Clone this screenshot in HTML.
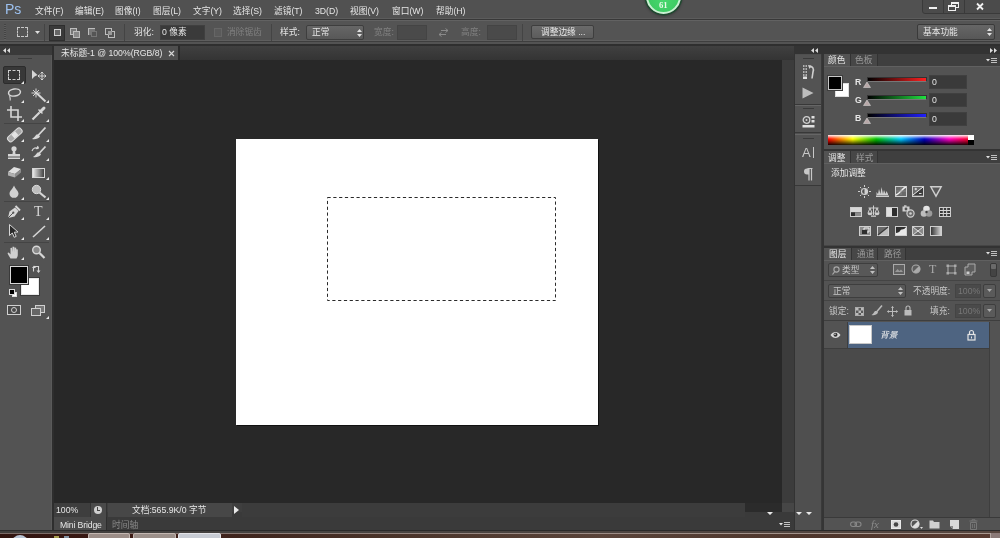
<!DOCTYPE html>
<html lang="zh-CN">
<head>
<meta charset="utf-8">
<title>Photoshop</title>
<style>
*{box-sizing:border-box;margin:0;padding:0}
html,body{width:1000px;height:538px;overflow:hidden;background:#535353}
body{position:relative;font-family:"Liberation Sans","Noto Sans CJK SC",sans-serif;font-size:8.7px;color:#e6e6e6;line-height:1}
.a{position:absolute}
.t{position:absolute;white-space:nowrap;line-height:12px;height:12px;will-change:transform}
svg{position:absolute;overflow:visible}
/* bars */
#menubar{left:0;top:0;width:1000px;height:19px;background:#515151;border-bottom:1px solid #5c5c5c}
#optbar{left:0;top:20px;width:1000px;height:24px;background:#545454;border-top:1px solid #626262;box-shadow:inset 0 -2px 0 #535353,inset 0 -3px 0 #3e3e3e,inset 0 -4px 0 #5e5e5e}
#sep1{left:0;top:19px;width:1000px;height:1px;background:#383838}
#sep2{left:0;top:44px;width:1000px;height:2px;background:#2f2f2f}
#tabbar{left:54px;top:46px;width:740px;height:14px;background:linear-gradient(180deg,#404040,#343434)}
#doctab{left:54px;top:46px;width:126px;height:14px;background:#4f4f4f;border-right:2px solid #2c2c2c}
#canvasbg{left:54px;top:60px;width:740px;height:443px;background:#282828}
#doc{left:236px;top:139px;width:362px;height:286px;background:#fff;box-shadow:1px 1px 0 #111}
#statusbar{left:54px;top:503px;width:740px;height:14px;background:#464646}
#bridgebar{left:54px;top:517px;width:740px;height:14px;background:#3a3a3a}
#taskbar{left:0;top:533px;width:1000px;height:5px;background:linear-gradient(90deg,#30140f 0%,#3c1a14 12%,#40261e 25%,#4a342a 40%,#5a443a 60%,#4e362c 80%,#573a30 100%)}
#tbband{left:0;top:530px;width:1000px;height:3px;background:linear-gradient(90deg,#403e3c 0%,#454341 30%,#4c4440 60%,#56463f 100%);border-top:1px solid #2a2a2a}
/* tools */
#toolhead{left:0;top:46px;width:52px;height:9px;background:#3a3a3a}
#toolgap{left:52px;top:46px;width:2px;height:484px;background:#2e2e2e}
#tools{left:0;top:55px;width:52px;height:475px;background:#535353;border-right:1px solid #5a5a5a}
/* right dock */
#dockgap{left:794px;top:46px;width:206px;height:484px;background:#353535}
#iconcol{left:796px;top:54px;width:26px;height:477px;background:#535353}
.panel{background:#535353}
.tabrow{background:#3f3f3f}
.tab{background:#535353}
.m{top:5px}
.fld{background:#3a3a3a;border:1px solid #404040}
</style>
</head>
<body>
<!-- menu bar -->
<div class="a" id="menubar"></div>
<div class="a" id="sep1"></div>
<div class="a" id="optbar"></div>
<div class="a" id="sep2"></div>
<div class="a" id="tabbar"></div>
<div class="a" id="doctab"></div>
<div class="a" id="canvasbg"></div>
<div class="a" id="doc"></div>
<div class="a" id="statusbar"></div>
<div class="a" id="bridgebar"></div>
<div class="a" id="toolhead"></div>
<div class="a" id="tools"></div>
<div class="a" id="toolgap"></div>
<div class="a" id="dockgap"></div>
<div class="a" id="iconcol"></div>

<!-- dock header -->
<div class="a" style="left:794px;top:46px;width:206px;height:8px;background:#333"></div>
<!-- icon column groups -->
<div class="a" style="left:794px;top:54px;width:28px;height:477px;background:#4f4f4f;border-left:1px solid #333;border-right:1px solid #3a3a3a"></div>
<div class="a" style="left:795px;top:55px;width:26px;height:50px;background:#535353;border-bottom:1px solid #383838"></div>
<div class="a" style="left:795px;top:105px;width:26px;height:28px;background:#535353;border-top:1px solid #666;border-bottom:1px solid #383838"></div>
<div class="a" style="left:795px;top:134px;width:26px;height:52px;background:#535353;border-top:1px solid #666;border-bottom:1px solid #383838"></div>
<div class="a" style="left:803px;top:58px;width:11px;height:1px;background:#3a3a3a"></div>
<div class="a" style="left:803px;top:108px;width:11px;height:1px;background:#3a3a3a"></div>
<div class="a" style="left:803px;top:138px;width:11px;height:1px;background:#3a3a3a"></div>
<!-- COLOR PANEL -->
<div class="a tabrow" style="left:824px;top:54px;width:176px;height:12px"></div>
<div class="a tab" style="left:824px;top:54px;width:26px;height:12px"></div>
<div class="a" style="left:850px;top:54px;width:28px;height:12px;background:#474747;border-left:1px solid #333;border-right:1px solid #333"></div>
<div class="a panel" style="left:824px;top:66px;width:176px;height:83px;border-top:1px solid #606060"></div>
<!-- swatches -->
<div class="a" style="left:835px;top:83px;width:14px;height:14px;background:#fff;border:1px solid #ddd"></div>
<div class="a" style="left:828px;top:76px;width:14px;height:14px;background:#000;border:1px solid #c8c8c8;outline:1px solid #3e3e3e"></div>
<!-- sliders -->
<div class="a" style="left:867px;top:77px;width:60px;height:5px;background:linear-gradient(90deg,#000,#ff2020);border:1px solid #333;border-bottom-color:#777"></div>
<div class="a" style="left:867px;top:95px;width:60px;height:5px;background:linear-gradient(90deg,#000,#20e040);border:1px solid #333;border-bottom-color:#777"></div>
<div class="a" style="left:867px;top:113px;width:60px;height:5px;background:linear-gradient(90deg,#000,#2020ff);border:1px solid #333;border-bottom-color:#777"></div>
<svg style="left:863px;top:82px" width="8" height="6"><path d="M4 0 L7.5 5.5 L0.5 5.5Z" fill="#b8a8a8" stroke="#e0e0e0" stroke-width=".5"/></svg>
<svg style="left:863px;top:100px" width="8" height="6"><path d="M4 0 L7.5 5.5 L0.5 5.5Z" fill="#b8a8a8" stroke="#e0e0e0" stroke-width=".5"/></svg>
<svg style="left:863px;top:118px" width="8" height="6"><path d="M4 0 L7.5 5.5 L0.5 5.5Z" fill="#b8a8a8" stroke="#e0e0e0" stroke-width=".5"/></svg>
<div class="a fld" style="left:929px;top:75px;width:38px;height:14px"></div>
<div class="a fld" style="left:929px;top:93px;width:38px;height:14px"></div>
<div class="a fld" style="left:929px;top:112px;width:38px;height:14px"></div>
<!-- ramp -->
<div class="a" style="left:828px;top:135px;width:146px;height:10px;background:linear-gradient(90deg,#ff0000 0%,#ffff00 17%,#00c000 33%,#00c8ff 50%,#0000c0 66%,#ff00c0 83%,#ff0000 100%)"></div>
<div class="a" style="left:828px;top:135px;width:146px;height:10px;background:linear-gradient(180deg,rgba(255,255,255,.95) 0%,rgba(255,255,255,0) 40%,rgba(0,0,0,.1) 48%,rgba(0,0,0,.9) 100%)"></div>
<div class="a" style="left:968px;top:135px;width:6px;height:5px;background:#fff"></div>
<div class="a" style="left:968px;top:140px;width:6px;height:5px;background:#000"></div>
<!-- ADJUSTMENTS PANEL -->
<div class="a" style="left:824px;top:149px;width:176px;height:2px;background:#333"></div>
<div class="a tabrow" style="left:824px;top:151px;width:176px;height:12px"></div>
<div class="a tab" style="left:824px;top:151px;width:26px;height:12px"></div>
<div class="a" style="left:850px;top:151px;width:28px;height:12px;background:#474747;border-left:1px solid #333;border-right:1px solid #333"></div>
<div class="a panel" style="left:824px;top:163px;width:176px;height:82px;border-top:1px solid #606060"></div>
<!-- LAYERS PANEL -->
<div class="a" style="left:824px;top:245px;width:176px;height:1px;background:#454545"></div>
<div class="a" style="left:824px;top:246px;width:176px;height:2px;background:#333"></div>
<div class="a tabrow" style="left:824px;top:248px;width:176px;height:12px"></div>
<div class="a tab" style="left:824px;top:248px;width:27px;height:12px"></div>
<div class="a" style="left:851px;top:248px;width:27px;height:12px;background:#474747;border-left:1px solid #333;border-right:1px solid #333"></div>
<div class="a" style="left:878px;top:248px;width:28px;height:12px;background:#474747;border-right:1px solid #333"></div>
<div class="a panel" style="left:824px;top:260px;width:176px;height:258px;border-top:1px solid #606060"></div>
<div class="a" style="left:824px;top:280px;width:176px;height:1px;background:#444"></div>
<div class="a" style="left:824px;top:300px;width:176px;height:1px;background:#444"></div>
<div class="a" style="left:824px;top:320px;width:176px;height:1px;background:#3e3e3e"></div>
<!-- filter dropdown -->
<div class="a" style="left:828px;top:263px;width:50px;height:14px;background:#585858;border:1px solid #3e3e3e;border-radius:2px"></div>
<div class="a" style="left:990px;top:263px;width:7px;height:14px;background:#444;border:1px solid #383838;border-radius:2px"></div>
<div class="a" style="left:991px;top:264px;width:5px;height:5px;background:#6a6a6a;border-radius:1px"></div>
<!-- blend dropdown -->
<div class="a" style="left:828px;top:284px;width:78px;height:14px;background:#585858;border:1px solid #3e3e3e;border-radius:2px"></div>
<div class="a" style="left:955px;top:284px;width:26px;height:14px;background:#4a4a4a;border:1px solid #444"></div>
<div class="a" style="left:983px;top:284px;width:13px;height:14px;background:#5a5a5a;border:1px solid #3e3e3e;border-radius:2px"></div>
<div class="a" style="left:955px;top:304px;width:26px;height:14px;background:#4a4a4a;border:1px solid #444"></div>
<div class="a" style="left:983px;top:304px;width:13px;height:14px;background:#5a5a5a;border:1px solid #3e3e3e;border-radius:2px"></div>
<!-- layer row -->
<div class="a" style="left:824px;top:322px;width:24px;height:26px;background:#535353;border-right:1px solid #3e3e3e"></div>
<div class="a" style="left:848px;top:322px;width:141px;height:26px;background:#4e6481"></div>
<div class="a" style="left:824px;top:348px;width:165px;height:1px;background:#3e3e3e"></div>
<div class="a" style="left:849px;top:325px;width:23px;height:19px;background:#fff;border:1px solid #c8c8c8"></div>
<div class="a" style="left:824px;top:349px;width:165px;height:168px;background:#4a4a4a"></div>
<div class="a" style="left:989px;top:322px;width:11px;height:196px;background:#535353;border-left:1px solid #3e3e3e"></div>
<!-- layers bottom bar -->
<div class="a" style="left:824px;top:517px;width:176px;height:14px;background:#535353;border-top:1px solid #3a3a3a"></div>
<!-- PANELS -->

<!-- right panel text -->
<div class="t" style="left:828px;top:54px">颜色</div>
<div class="t" style="left:855px;top:54px;color:#9a9a9a">色板</div>
<div class="t" style="left:855px;top:76px;font-weight:bold">R</div>
<div class="t" style="left:855px;top:94px;font-weight:bold">G</div>
<div class="t" style="left:855px;top:112px;font-weight:bold">B</div>
<div class="t" style="left:932px;top:76px">0</div>
<div class="t" style="left:932px;top:94px">0</div>
<div class="t" style="left:932px;top:113px">0</div>
<div class="t" style="left:828px;top:152px">调整</div>
<div class="t" style="left:856px;top:152px;color:#9a9a9a">样式</div>
<div class="t" style="left:831px;top:167px">添加调整</div>
<div class="t" style="left:829px;top:248px">图层</div>
<div class="t" style="left:857px;top:248px;color:#9a9a9a">通道</div>
<div class="t" style="left:884px;top:248px;color:#9a9a9a">路径</div>
<div class="t" style="left:842px;top:264px;color:#c8c8c8">类型</div>
<div class="t" style="left:833px;top:285px;color:#c8c8c8">正常</div>
<div class="t" style="left:913px;top:285px;color:#c8c8c8">不透明度:</div>
<div class="t" style="left:958px;top:285px;color:#777">100%</div>
<div class="t" style="left:829px;top:305px;color:#c8c8c8">锁定:</div>
<div class="t" style="left:930px;top:305px;color:#c8c8c8">填充:</div>
<div class="t" style="left:958px;top:305px;color:#777">100%</div>
<div class="t" style="left:880px;top:329px;font-style:italic;color:#f0f0f0">背景</div>

<!-- Ps logo -->
<div class="t" style="left:5px;top:1px;font-size:14px;line-height:17px;height:17px;color:#9cc0ee;letter-spacing:0">Ps</div>
<!-- menus -->
<div class="t m" style="left:35px">文件(F)</div>
<div class="t m" style="left:75px">编辑(E)</div>
<div class="t m" style="left:115px">图像(I)</div>
<div class="t m" style="left:153px">图层(L)</div>
<div class="t m" style="left:193px">文字(Y)</div>
<div class="t m" style="left:233px">选择(S)</div>
<div class="t m" style="left:274px">滤镜(T)</div>
<div class="t m" style="left:315px">3D(D)</div>
<div class="t m" style="left:350px">视图(V)</div>
<div class="t m" style="left:392px">窗口(W)</div>
<div class="t m" style="left:436px">帮助(H)</div>
<!-- green badge -->
<div class="a" style="left:646px;top:-21px;width:35px;height:35px;border-radius:50%;background:radial-gradient(circle at 50% 60%,#48d86e,#36c25c);border:2px solid #c8f2d2;box-shadow:0 0 0 1.500px #1f4a30,0 1px 3px 1px rgba(0,0,0,.35)"></div>
<div class="t" style="left:659px;top:-1px;font-family:'Liberation Serif',serif;font-weight:bold;font-size:8.700px;color:#e8fbe8">61</div>
<!-- window controls -->
<div class="a" style="left:922px;top:-1px;width:79px;height:15px;background:#4b4b4b;border:1px solid #3a3a3a;border-radius:0 0 0 3px"></div>
<div class="a" style="left:943px;top:0;width:1px;height:13px;background:#3a3a3a"></div>
<div class="a" style="left:964px;top:0;width:1px;height:13px;background:#3a3a3a"></div>
<div class="a" style="left:929px;top:7px;width:8px;height:2px;background:#f0f0f0"></div>
<div class="a" style="left:951px;top:2px;width:8px;height:6px;border:1px solid #f0f0f0;border-top-width:2px"></div>
<div class="a" style="left:948px;top:5px;width:8px;height:6px;border:1px solid #f0f0f0;border-top-width:2px;background:#4b4b4b"></div>
<svg style="left:976px;top:3px" width="8" height="7"><path d="M1 0.5 L7 6.5 M7 0.5 L1 6.5" stroke="#f0f0f0" stroke-width="1.8"/></svg>
<!-- options bar -->
<div class="a" style="left:4px;top:24px;width:2px;height:16px;background:repeating-linear-gradient(180deg,#444 0 1px,#5e5e5e 1px 2px)"></div>
<div class="a" style="left:17px;top:27px;width:11px;height:10px;border:1px dashed #c8c8c8"></div>
<svg style="left:35px;top:31px" width="5" height="3"><path d="M0 0H5L2.5 3Z" fill="#e0e0e0"/></svg>
<div class="a" style="left:44px;top:24px;width:1px;height:17px;background:#444"></div>
<div class="a" style="left:49px;top:25px;width:16px;height:16px;background:#3a3a3a;border:1px solid #2e2e2e"></div>
<div class="a" style="left:54px;top:29px;width:7px;height:7px;border:1px solid #d0d0d0;background:#666"></div>
<div class="a" style="left:70px;top:28px;width:7px;height:7px;border:1px solid #bdbdbd;background:#777"></div>
<div class="a" style="left:73px;top:31px;width:7px;height:7px;border:1px solid #bdbdbd;background:#888"></div>
<div class="a" style="left:88px;top:28px;width:7px;height:7px;border:1px solid #bdbdbd;border-right:0;border-bottom:0;background:#777"></div>
<div class="a" style="left:91px;top:31px;width:6px;height:6px;background:#555;border:1px solid #777"></div>
<div class="a" style="left:105px;top:28px;width:7px;height:7px;border:1px solid #bdbdbd"></div>
<div class="a" style="left:108px;top:31px;width:7px;height:7px;border:1px solid #bdbdbd"></div>
<div class="a" style="left:108px;top:31px;width:4px;height:4px;background:#999"></div>
<div class="a" style="left:124px;top:24px;width:1px;height:17px;background:#444"></div>
<div class="t" style="left:134px;top:26px">羽化:</div>
<div class="a fld" style="left:160px;top:25px;width:45px;height:15px"></div>
<div class="t" style="left:162px;top:26px">0 像素</div>
<div class="a" style="left:214px;top:28px;width:8px;height:9px;background:#5a5a5a;border:1px solid #666"></div>
<div class="t" style="left:227px;top:26px;color:#808080">消除锯齿</div>
<div class="a" style="left:271px;top:24px;width:1px;height:17px;background:#444"></div>
<div class="t" style="left:280px;top:26px">样式:</div>
<div class="a" style="left:306px;top:25px;width:58px;height:15px;background:linear-gradient(180deg,#666,#585858);border:1px solid #3e3e3e;border-radius:2px"></div>
<div class="t" style="left:312px;top:26px">正常</div>
<svg style="left:357px;top:29px" width="5" height="8"><path d="M0 3H5L2.5 0ZM0 5H5L2.5 8Z" fill="#e0e0e0"/></svg>
<div class="t" style="left:374px;top:26px;color:#808080">宽度:</div>
<div class="a" style="left:397px;top:25px;width:30px;height:15px;background:#4a4a4a;border:1px solid #444"></div>
<svg style="left:439px;top:28px" width="9" height="9"><path d="M2 2.5H9M9 2.5L6.5 0.5M9 2.5L6.5 4.5M7 6.5H0M0 6.5L2.5 4.5M0 6.5L2.5 8.5" stroke="#8a8a8a" stroke-width="1" fill="none"/></svg>
<div class="t" style="left:461px;top:26px;color:#808080">高度:</div>
<div class="a" style="left:487px;top:25px;width:30px;height:15px;background:#4a4a4a;border:1px solid #444"></div>
<div class="a" style="left:522px;top:24px;width:1px;height:17px;background:#444"></div>
<div class="a" style="left:531px;top:25px;width:63px;height:14px;background:linear-gradient(180deg,#6a6a6a,#5c5c5c);border:1px solid #3e3e3e;border-radius:2px"></div>
<div class="t" style="left:541px;top:26px">调整边缘 ...</div>
<div class="a" style="left:917px;top:24px;width:78px;height:16px;background:linear-gradient(180deg,#666,#575757);border:1px solid #3a3a3a;border-radius:2px"></div>
<div class="t" style="left:923px;top:26px">基本功能</div>
<svg style="left:987px;top:28px" width="5" height="8"><path d="M0 3H5L2.5 0ZM0 5H5L2.5 8Z" fill="#e0e0e0"/></svg>
<!-- doc tab -->
<div class="t" style="left:61px;top:47px">未标题-1 @ 100%(RGB/8)</div>
<svg style="left:169px;top:51px" width="5" height="5"><path d="M0 0L5 5M5 0L0 5" stroke="#d8d8d8" stroke-width="1.1"/></svg>
<!-- TEXT -->

<!-- toolbox -->
<svg style="left:3px;top:48px" width="7" height="5"><path d="M3 0V5L0 2.5ZM7 0V5L4 2.5Z" fill="#dcdcdc"/></svg>
<div class="a" style="left:18px;top:58px;width:14px;height:1px;background:#3c3c3c"></div>
<div class="a" style="left:3px;top:66px;width:23px;height:18px;background:#383838;border:1px solid #2c2c2c;border-radius:2px"></div>
<div class="a" style="left:4px;top:123px;width:45px;height:1px;background:#444"></div>
<div class="a" style="left:4px;top:201px;width:45px;height:1px;background:#444"></div>
<div class="a" style="left:4px;top:242px;width:45px;height:1px;background:#444"></div>
<!-- marquee -->
<div class="a" style="left:8px;top:70px;width:12px;height:10px;border:1px dashed #d0d0d0"></div>
<!-- move -->
<svg style="left:31px;top:69px" width="16" height="12"><path d="M1 1V10L3.5 7.5L6.5 6Z" fill="#d6d6d6"/><path d="M11 3V11M7 7H15M11 3L9.5 4.5M11 3L12.5 4.5M11 11L9.5 9.5M11 11L12.5 9.5M7 7L8.5 5.5M7 7L8.5 8.5M15 7L13.5 5.5M15 7L13.5 8.5" stroke="#d6d6d6" stroke-width="1" fill="none"/></svg>
<!-- lasso -->
<svg style="left:7px;top:88px" width="15" height="14"><ellipse cx="7.5" cy="4.5" rx="6" ry="3.5" fill="none" stroke="#d6d6d6" stroke-width="1.5" transform="rotate(-8 7.5 4.5)"/><path d="M3 7.5C2 9 4 10 3 12.5" stroke="#d6d6d6" stroke-width="1.1" fill="none"/></svg>
<!-- wand -->
<svg style="left:31px;top:88px" width="16" height="15"><path d="M6 5.5L14.5 13.5" stroke="#d6d6d6" stroke-width="2"/><path d="M5 0.5V9.5M0.500 5H9.500M2 2L8 8M8 2L2 8" stroke="#d6d6d6" stroke-width="1"/></svg>
<!-- crop -->
<svg style="left:7px;top:106px" width="15" height="15"><path d="M4 0V11H15M0 4H11V15" stroke="#d6d6d6" stroke-width="1.6" fill="none"/></svg>
<!-- eyedropper -->
<svg style="left:31px;top:106px" width="15" height="15"><path d="M1.500 13.500L8.500 6.500" stroke="#d6d6d6" stroke-width="2.2"/><path d="M7.500 3.500L11.500 7.500" stroke="#d6d6d6" stroke-width="1.5"/><path d="M9.500 5.500L13 2" stroke="#d6d6d6" stroke-width="3" stroke-linecap="round"/></svg>
<!-- heal -->
<svg style="left:7px;top:127px" width="15" height="15"><rect x="-1" y="5" width="17" height="6" rx="2.5" fill="#a8a8a8" stroke="#dcdcdc" stroke-width="1" transform="rotate(-42 7.500 7.500)"/><rect x="5" y="5.500" width="5" height="5" fill="#e4e4e4" transform="rotate(-42 7.500 7.500)"/></svg>
<!-- brush -->
<svg style="left:31px;top:127px" width="16" height="15"><path d="M14.500 0.500L7 8.500" stroke="#d6d6d6" stroke-width="1.8"/><path d="M7.500 7.500L9 9.500C7.500 12 4 12.500 1 12C3 11 4 9 5.500 7.500Z" fill="#d6d6d6"/></svg>
<!-- stamp -->
<svg style="left:7px;top:146px" width="14" height="13"><circle cx="7" cy="2.800" r="2.600" fill="#d6d6d6"/><path d="M6 4H8L8.500 8H13V10.500H1V8H5.500Z" fill="#d6d6d6"/><rect x="1" y="11.500" width="12" height="1.500" fill="#d6d6d6"/></svg>
<!-- history brush -->
<svg style="left:31px;top:146px" width="16" height="14"><path d="M14.500 0.500L8 7.500" stroke="#d6d6d6" stroke-width="1.800"/><path d="M8.500 6.500L10 8.500C8.500 11 5 11.500 2 11C4 10 5 8 6.500 6.500Z" fill="#d6d6d6"/><path d="M1 5C2 2 5 1 7.500 2.500M7.500 2.500L4.800 2.600M7.500 2.500L6.500 0" stroke="#d6d6d6" stroke-width="1.100" fill="none"/></svg>
<!-- eraser -->
<svg style="left:7px;top:166px" width="15" height="12"><path d="M1 6L7 1L14 3L8 8Z" fill="#e0e0e0"/><path d="M1 6L8 8V11.500L1 9.500Z" fill="#b0b0b0"/><path d="M8 8L14 3V6.500L8 11.500Z" fill="#8c8c8c"/></svg>
<!-- gradient -->
<svg style="left:32px;top:168px" width="13" height="10"><defs><linearGradient id="gg" x1="0" x2="1"><stop offset="0" stop-color="#f0f0f0"/><stop offset="1" stop-color="#3a3a3a"/></linearGradient></defs><rect x=".5" y=".5" width="12" height="9" fill="url(#gg)" stroke="#d6d6d6" stroke-width="1"/></svg>
<!-- blur drop -->
<svg style="left:9px;top:185px" width="10" height="13"><path d="M5 0.500C6.500 4 9.500 6 9.500 8.800A4.500 4 0 0 1 0.500 8.800C0.500 6 3.500 4 5 0.500Z" fill="#d0d0d0"/></svg>
<!-- dodge -->
<svg style="left:31px;top:184px" width="16" height="15"><circle cx="5.500" cy="5.500" r="4.200" fill="#bdbdbd" stroke="#dcdcdc" stroke-width="1"/><path d="M8.500 8.500L14.500 13.500" stroke="#d6d6d6" stroke-width="2.200"/></svg>
<!-- pen -->
<svg style="left:7px;top:205px" width="14" height="14"><path d="M1 13L2.500 6.500L8 2.500L11.500 6L7.500 11.500Z" fill="#d6d6d6"/><path d="M1 13L6 8" stroke="#535353" stroke-width="1"/><circle cx="6.300" cy="7.700" r="1.100" fill="#535353"/><path d="M8.500 1L13 5.500" stroke="#d6d6d6" stroke-width="2"/></svg>
<!-- T -->
<div class="t" style="left:34px;top:205px;font-family:'Liberation Serif',serif;font-size:14px;line-height:14px;height:14px;color:#d6d6d6">T</div>
<!-- path select -->
<svg style="left:8px;top:224px" width="12" height="14"><path d="M1.500 0.500V11.500L4.300 9L6.200 13.300L8.200 12.400L6.300 8.200L10 8Z" fill="#2a2a2a" stroke="#d6d6d6" stroke-width="1"/></svg>
<!-- line -->
<svg style="left:32px;top:225px" width="14" height="13"><path d="M1 12L13 1" stroke="#d6d6d6" stroke-width="1.600"/></svg>
<!-- hand -->
<svg style="left:7px;top:246px" width="15" height="13"><path d="M3.500 12.500C2.500 10.500 1 9 0.500 7L1.800 6.500L3.500 8.500V2L5 1.800L5.500 6V0.800L7.200 0.800L7.500 6V1.500L9.200 1.700L9.300 6.500V3.200L10.800 3.500V9C10.800 10.500 10 11.500 9.500 12.500Z" fill="#d0d0d0"/></svg>
<!-- zoom -->
<svg style="left:31px;top:245px" width="15" height="14"><circle cx="5.500" cy="5" r="3.800" fill="#8a8a8a" stroke="#d6d6d6" stroke-width="1.400"/><path d="M8.500 8L13.500 13" stroke="#d6d6d6" stroke-width="2.200"/></svg>
<!-- swatches -->
<div class="a" style="left:21px;top:278px;width:18px;height:17px;background:#fff;border:1px solid #e8e8e8;outline:1px solid #3a3a3a"></div>
<div class="a" style="left:10px;top:266px;width:18px;height:18px;background:#000;border:1px solid #d8d8d8;outline:1px solid #3a3a3a"></div>
<svg style="left:32px;top:265px" width="9" height="9"><path d="M2 1.500H6.500V6.500M1.500 2V6.500" stroke="#d6d6d6" stroke-width="1.100" fill="none"/><path d="M0 3L2 0.500L4 3ZM4.500 5.500L6.500 8L8.500 5.500Z" fill="#d6d6d6"/></svg>
<div class="a" style="left:12px;top:292px;width:5px;height:5px;background:#fff;border:1px solid #ddd"></div>
<div class="a" style="left:9px;top:289px;width:6px;height:6px;background:#000;border:1px solid #ddd"></div>
<!-- quick mask -->
<div class="a" style="left:7px;top:305px;width:14px;height:10px;border:1px solid #d0d0d0;background:#4a4a4a"></div>
<div class="a" style="left:11px;top:307px;width:6px;height:6px;border:1px solid #d0d0d0;border-radius:50%"></div>
<!-- screen mode -->
<div class="a" style="left:35px;top:305px;width:10px;height:8px;border:1px solid #d0d0d0;background:#777"></div>
<div class="a" style="left:31px;top:308px;width:10px;height:8px;border:1px solid #d0d0d0;background:#666"></div>
<svg style="left:21px;top:81px" width="3" height="3"><path d="M3 0V3H0Z" fill="#e8e8e8"/></svg>
<svg style="left:21px;top:100px" width="3" height="3"><path d="M3 0V3H0Z" fill="#e8e8e8"/></svg>
<svg style="left:46px;top:100px" width="3" height="3"><path d="M3 0V3H0Z" fill="#e8e8e8"/></svg>
<svg style="left:21px;top:119px" width="3" height="3"><path d="M3 0V3H0Z" fill="#e8e8e8"/></svg>
<svg style="left:46px;top:119px" width="3" height="3"><path d="M3 0V3H0Z" fill="#e8e8e8"/></svg>
<svg style="left:21px;top:139px" width="3" height="3"><path d="M3 0V3H0Z" fill="#e8e8e8"/></svg>
<svg style="left:46px;top:139px" width="3" height="3"><path d="M3 0V3H0Z" fill="#e8e8e8"/></svg>
<svg style="left:21px;top:158px" width="3" height="3"><path d="M3 0V3H0Z" fill="#e8e8e8"/></svg>
<svg style="left:46px;top:158px" width="3" height="3"><path d="M3 0V3H0Z" fill="#e8e8e8"/></svg>
<svg style="left:21px;top:177px" width="3" height="3"><path d="M3 0V3H0Z" fill="#e8e8e8"/></svg>
<svg style="left:46px;top:177px" width="3" height="3"><path d="M3 0V3H0Z" fill="#e8e8e8"/></svg>
<svg style="left:21px;top:197px" width="3" height="3"><path d="M3 0V3H0Z" fill="#e8e8e8"/></svg>
<svg style="left:46px;top:197px" width="3" height="3"><path d="M3 0V3H0Z" fill="#e8e8e8"/></svg>
<svg style="left:21px;top:217px" width="3" height="3"><path d="M3 0V3H0Z" fill="#e8e8e8"/></svg>
<svg style="left:46px;top:217px" width="3" height="3"><path d="M3 0V3H0Z" fill="#e8e8e8"/></svg>
<svg style="left:21px;top:237px" width="3" height="3"><path d="M3 0V3H0Z" fill="#e8e8e8"/></svg>
<svg style="left:46px;top:237px" width="3" height="3"><path d="M3 0V3H0Z" fill="#e8e8e8"/></svg>
<svg style="left:21px;top:257px" width="3" height="3"><path d="M3 0V3H0Z" fill="#e8e8e8"/></svg>
<svg style="left:46px;top:316px" width="3" height="3"><path d="M3 0V3H0Z" fill="#e8e8e8"/></svg>

<!-- selection marquee -->
<svg style="left:327px;top:197px" width="229" height="104"><rect x=".5" y=".5" width="228" height="103" fill="none" stroke="#fff" stroke-width="1"/><rect x=".5" y=".5" width="228" height="103" fill="none" stroke="#2a2a2a" stroke-width="1" stroke-dasharray="3.2 2.6"/></svg>
<!-- scrollbars -->
<div class="a" style="left:782px;top:60px;width:12px;height:443px;background:#3c3c3c"></div>
<div class="a" style="left:54px;top:503px;width:691px;height:9px;background:#3f3f3f"></div>
<div class="a" style="left:745px;top:503px;width:37px;height:9px;background:#2b2b2b"></div>
<div class="a" style="left:54px;top:512px;width:740px;height:5px;background:#3a3a3a"></div>
<svg style="left:765px;top:512px" width="50" height="4"><path d="M2 0H8L5 3ZM31 0H37L34 3ZM41 0H47L44 3Z" fill="#e8e8e8"/></svg>
<!-- status bar -->
<div class="a" style="left:54px;top:503px;width:36px;height:14px;background:#3e3e3e"></div>
<div class="t" style="left:56px;top:504px">100%</div>
<div class="a" style="left:90px;top:503px;width:17px;height:14px;background:#4a4a4a;border-left:1px solid #333;border-right:1px solid #333"></div>
<div class="a" style="left:94px;top:506px;width:8px;height:8px;border-radius:50%;background:#cfcfcf"></div>
<div class="a" style="left:97px;top:507px;width:1px;height:4px;background:#444"></div>
<div class="a" style="left:97px;top:510px;width:3px;height:1px;background:#444"></div>
<div class="a" style="left:108px;top:503px;width:124px;height:14px;background:#474747"></div>
<div class="t" style="left:132px;top:504px">文档:565.9K/0 字节</div>
<svg style="left:234px;top:506px" width="5" height="8"><path d="M0 0V8L5 4Z" fill="#e8e8e8"/></svg>
<div class="a" style="left:242px;top:503px;width:503px;height:14px;background:#3c3c3c"></div>
<!-- mini bridge -->
<div class="a" style="left:54px;top:517px;width:53px;height:13px;background:#4a4a4a;border-right:1px solid #2e2e2e"></div>
<div class="t" style="left:60px;top:519px;letter-spacing:-.15px">Mini Bridge</div>
<div class="t" style="left:112px;top:519px;color:#8a8a8a">时间轴</div>
<svg style="left:779px;top:522px" width="11" height="6"><path d="M0 1H4L2 3.500Z" fill="#e0e0e0"/><path d="M5 0.500H11M5 2.500H11M5 4.500H11" stroke="#c0c0c0" stroke-width="1"/></svg>

<!-- dock header arrows -->
<svg style="left:811px;top:48px" width="7" height="5"><path d="M3 0V5L0 2.500ZM7 0V5L4 2.500Z" fill="#dcdcdc"/></svg>
<svg style="left:990px;top:48px" width="7" height="5"><path d="M0 0V5L3 2.500ZM4 0V5L7 2.500Z" fill="#dcdcdc"/></svg>
<svg style="left:986px;top:58px" width="11" height="6"><path d="M0 1H4L2 3.500Z" fill="#e0e0e0"/><path d="M5 0.500H11M5 2.500H11M5 4.500H11" stroke="#c0c0c0" stroke-width="1"/></svg>
<svg style="left:986px;top:155px" width="11" height="6"><path d="M0 1H4L2 3.500Z" fill="#e0e0e0"/><path d="M5 0.500H11M5 2.500H11M5 4.500H11" stroke="#c0c0c0" stroke-width="1"/></svg>
<svg style="left:986px;top:251px" width="11" height="6"><path d="M0 1H4L2 3.500Z" fill="#e0e0e0"/><path d="M5 0.500H11M5 2.500H11M5 4.500H11" stroke="#c0c0c0" stroke-width="1"/></svg>

<!-- history icon -->
<svg style="left:802px;top:64px" width="13" height="16"><path d="M1 2H5M1 5H5M1 8H5M1 11H5" stroke="#cfcfcf" stroke-width="1.400" stroke-dasharray="1.500 1"/><rect x="1" y="12.500" width="4" height="2.500" fill="#e0e0e0"/><path d="M7 3C11 1.500 12 5 11 8L10 14.500" stroke="#cfcfcf" stroke-width="1.600" fill="none"/><path d="M6 1L9.500 1.500L7.500 5Z" fill="#cfcfcf"/></svg>
<!-- actions (play) -->
<svg style="left:802px;top:87px" width="12" height="12"><path d="M0.500 0.500V11.500L11.500 6Z" fill="#bdbdbd"/></svg>
<!-- properties -->
<svg style="left:802px;top:115px" width="13" height="13"><circle cx="4.500" cy="5" r="3.300" fill="none" stroke="#cfcfcf" stroke-width="1.300"/><circle cx="4.500" cy="5" r="1" fill="#cfcfcf"/><rect x="9.500" y="1" width="3" height="2.500" fill="#e0e0e0"/><rect x="9.500" y="5" width="3" height="2.500" fill="#e0e0e0"/><rect x="0.500" y="10" width="12" height="2.500" fill="#e0e0e0"/></svg>
<!-- character -->
<div class="t" style="left:802px;top:146px;font-size:13px;line-height:13px;height:13px;color:#c8c8c8">A</div>
<div class="a" style="left:813px;top:147px;width:1px;height:11px;background:#c8c8c8"></div>
<!-- paragraph -->
<svg style="left:803px;top:168px" width="10" height="13"><path d="M4.500 0.500H9.500M6 0.500V12.500M8.500 0.500V12.500" stroke="#c8c8c8" stroke-width="1.200" fill="none"/><path d="M6 0.500H4A3 3 0 0 0 4 6.500H6Z" fill="#c8c8c8"/></svg>
<!-- adjustments row 1 -->
<svg style="left:858px;top:185px" width="13" height="13"><circle cx="6.500" cy="6.500" r="3" fill="none" stroke="#cfcfcf" stroke-width="1.200"/><path d="M6.500 3.500A3 3 0 0 1 6.500 9.500Z" fill="#cfcfcf"/><path d="M6.500 0V2M6.500 11V13M0 6.500H2M11 6.500H13M2 2L3.300 3.300M9.700 9.700L11 11M2 11L3.300 9.700M9.700 3.300L11 2" stroke="#cfcfcf" stroke-width="1"/></svg>
<svg style="left:876px;top:186px" width="13" height="11"><path d="M0.500 9V6L2 8L3 3L4.500 8L5.500 1L7 8L8 4L9.500 8L10.500 5L12 8V9Z" fill="#cfcfcf"/><rect x="0" y="9.500" width="13" height="1.500" fill="#cfcfcf"/></svg>
<svg style="left:894.5px;top:186px" width="12" height="11"><rect x=".5" y=".5" width="11" height="10" fill="#6a6a6a" stroke="#cfcfcf" stroke-width="1"/><path d="M1 9C5 8 7 2 11 1" stroke="#eee" stroke-width="1.300" fill="none"/><path d="M1 5H11M6 1V9" stroke="#999" stroke-width=".6"/></svg>
<svg style="left:912px;top:186px" width="12" height="11"><rect x=".5" y=".5" width="11" height="10" fill="#6a6a6a" stroke="#cfcfcf" stroke-width="1"/><path d="M11 1V9H1Z" fill="#3c3c3c"/><path d="M1 9L11 1" stroke="#eee" stroke-width="1"/><path d="M2.500 3H5M3.800 1.800V4.300M7 7.500H9.500" stroke="#eee" stroke-width=".9"/></svg>
<svg style="left:930px;top:186px" width="12" height="11"><path d="M0.800 0.800H11.200L6 10.200Z" fill="#5a5a5a" stroke="#cfcfcf" stroke-width="1.400"/></svg>
<!-- adjustments row 2 -->
<svg style="left:850px;top:206.5px" width="12" height="10"><rect x=".5" y=".5" width="11" height="9" fill="#6a6a6a" stroke="#cfcfcf" stroke-width="1"/><rect x="1" y="1" width="10" height="4" fill="#d8d8d8"/><rect x="1" y="5.500" width="4" height="3.500" fill="#2e2e2e"/><rect x="5" y="5.500" width="6" height="3.500" fill="#8c8c8c"/></svg>
<svg style="left:867px;top:205px" width="13" height="12"><path d="M6.500 0.500V10M1.500 3H11.500M3 3L1 8H5ZM10 3L8 8H12Z" stroke="#cfcfcf" stroke-width="1" fill="none"/><path d="M0.500 8H5.500A2.500 2.200 0 0 1 0.500 8ZM7.500 8H12.500A2.500 2.200 0 0 1 7.500 8Z" fill="#cfcfcf"/><rect x="4" y="10.500" width="5" height="1.300" fill="#cfcfcf"/></svg>
<svg style="left:885.5px;top:206.5px" width="12" height="10"><rect x=".5" y=".5" width="11" height="9" fill="#6a6a6a" stroke="#cfcfcf" stroke-width="1"/><rect x="1" y="1" width="5" height="8" fill="#e0e0e0"/><rect x="6" y="1" width="5" height="8" fill="#2e2e2e"/></svg>
<svg style="left:902px;top:205px" width="13" height="13"><rect x="0.500" y="1.500" width="7" height="5" fill="#cfcfcf"/><rect x="2" y="0.300" width="2.500" height="1.500" fill="#cfcfcf"/><circle cx="4" cy="4" r="1.400" fill="#555"/><circle cx="8.500" cy="8.500" r="3.600" fill="#6a6a6a" stroke="#cfcfcf" stroke-width="1.200"/><circle cx="8.500" cy="8.500" r="1.300" fill="#cfcfcf"/></svg>
<svg style="left:920px;top:205px" width="13" height="13"><circle cx="6.500" cy="4" r="3.300" fill="#e4e4e4"/><circle cx="4" cy="8.500" r="3.300" fill="#bdbdbd"/><circle cx="9" cy="8.500" r="3.300" fill="#9a9a9a"/><circle cx="6.500" cy="7" r="1.200" fill="#3e3e3e"/></svg>
<svg style="left:938.5px;top:206.5px" width="12" height="10"><rect x=".5" y=".5" width="11" height="9" fill="#6a6a6a" stroke="#cfcfcf" stroke-width="1"/><rect x="1" y="1" width="10" height="8" fill="#3a3a3a"/><path d="M1 3.500H11M1 6.500H11M4.300 1V9M7.700 1V9" stroke="#d8d8d8" stroke-width="1"/></svg>
<!-- adjustments row 3 -->
<svg style="left:859px;top:226px" width="12" height="10"><rect x=".5" y=".5" width="11" height="9" fill="#6a6a6a" stroke="#cfcfcf" stroke-width="1"/><rect x="1" y="1" width="10" height="8" fill="#8a8a8a"/><path d="M3 8V4H8V8Z" fill="#2e2e2e"/><path d="M5 4V2H10V6H8" stroke="#eee" stroke-width="1" fill="none"/></svg>
<svg style="left:876.5px;top:226px" width="12" height="10"><rect x=".5" y=".5" width="11" height="9" fill="#6a6a6a" stroke="#cfcfcf" stroke-width="1"/><path d="M1 9L11 1V9Z" fill="#bdbdbd"/><path d="M1 9L11 1" stroke="#3a3a3a" stroke-width="1.200"/></svg>
<svg style="left:894.5px;top:226px" width="12" height="10"><rect x=".5" y=".5" width="11" height="9" fill="#6a6a6a" stroke="#cfcfcf" stroke-width="1"/><path d="M1 9V7L4 6L6 3.500L9 3L11 1V9Z" fill="#e8e8e8"/><path d="M1 1H11V1L9 3L6 3.500L4 6L1 7Z" fill="#2e2e2e"/></svg>
<svg style="left:912px;top:226px" width="12" height="10"><rect x=".5" y=".5" width="11" height="9" fill="#6a6a6a" stroke="#cfcfcf" stroke-width="1"/><path d="M1 1L6 5L1 9Z" fill="#8a8a8a"/><path d="M11 1L6 5L11 9Z" fill="#8a8a8a"/><path d="M1 1L11 9M11 1L1 9" stroke="#e0e0e0" stroke-width="1"/></svg>
<svg style="left:930px;top:226px" width="12" height="10"><defs><linearGradient id="g2" x1="0" x2="1"><stop offset="0" stop-color="#2e2e2e"/><stop offset="1" stop-color="#dcdcdc"/></linearGradient></defs><rect x=".5" y=".5" width="11" height="9" fill="url(#g2)" stroke="#cfcfcf"/></svg>
<!-- layers filter icons -->
<svg style="left:832px;top:266px" width="8" height="9"><circle cx="4.500" cy="3.500" r="2.600" fill="none" stroke="#aaa" stroke-width="1.100"/><path d="M2.800 5.500L0.500 8.500" stroke="#aaa" stroke-width="1.200"/></svg>
<svg style="left:870px;top:266px" width="5" height="8"><path d="M0 3H5L2.500 0ZM0 5H5L2.500 8Z" fill="#c0c0c0"/></svg>
<svg style="left:893px;top:264px" width="12" height="11"><rect x=".5" y=".5" width="11" height="10" fill="#606060" stroke="#aaa" stroke-width="1"/><path d="M2 8L4.500 5L6.500 7L8 5.500L10 8Z" fill="#999"/></svg>
<svg style="left:911px;top:264px" width="10" height="10"><circle cx="5" cy="5" r="4" fill="#5e5e5e" stroke="#aaa" stroke-width="1.100"/><path d="M5 1A4 4 0 0 1 5 9Z" fill="#aaa" transform="rotate(45 5 5)"/></svg>
<div class="t" style="left:929px;top:263px;font-family:'Liberation Serif',serif;font-size:12px;color:#aaa">T</div>
<svg style="left:946px;top:264px" width="11" height="11"><rect x="2" y="2" width="7" height="7" fill="none" stroke="#aaa" stroke-width="1.100"/><rect x="0.500" y="0.500" width="2.500" height="2.500" fill="#aaa"/><rect x="8" y="0.500" width="2.500" height="2.500" fill="#aaa"/><rect x="0.500" y="8" width="2.500" height="2.500" fill="#aaa"/><rect x="8" y="8" width="2.500" height="2.500" fill="#aaa"/></svg>
<svg style="left:964px;top:263px" width="12" height="13"><path d="M4 1H11V9H8V12H1V4H4Z" fill="#5e5e5e" stroke="#aaa" stroke-width="1"/><rect x="2.500" y="8.500" width="3" height="2.500" fill="#ccc"/></svg>
<!-- blend arrows -->
<svg style="left:898px;top:287px" width="5" height="8"><path d="M0 3H5L2.500 0ZM0 5H5L2.500 8Z" fill="#c0c0c0"/></svg>
<svg style="left:987px;top:289px" width="5" height="3"><path d="M0 0H5L2.500 3Z" fill="#aaa"/></svg>
<svg style="left:987px;top:309px" width="5" height="3"><path d="M0 0H5L2.500 3Z" fill="#aaa"/></svg>
<!-- lock icons -->
<svg style="left:855px;top:307px" width="9" height="9"><rect x=".5" y=".5" width="8" height="8" fill="#5a5a5a" stroke="#aaa"/><path d="M1 1H3.500V3.500H1ZM6 1H8V3.500H6ZM3.500 3.500H6V6H3.500ZM1 6H3.500V8H1ZM6 6H8V8H6Z" fill="#bbb"/></svg>
<svg style="left:871px;top:305px" width="12" height="12"><path d="M11 0.500L5.500 7" stroke="#bbb" stroke-width="1.500"/><path d="M5.500 6L7 7.500C6 10 3 10.500 0.500 10C2 9 3 7.500 4 6Z" fill="#bbb"/></svg>
<svg style="left:887px;top:306px" width="11" height="11"><path d="M5.500 0.500V10.500M0.500 5.500H10.500" stroke="#bbb" stroke-width="1"/><path d="M5.500 0L7 2H4ZM5.500 11L7 9H4ZM0 5.500L2 4V7ZM11 5.500L9 4V7Z" fill="#bbb"/></svg>
<svg style="left:904px;top:305px" width="8" height="11"><path d="M2 5V3A2 2 0 0 1 6 3V5" stroke="#bbb" stroke-width="1.100" fill="none"/><rect x="0.500" y="5" width="7" height="5.500" fill="#bbb"/></svg>
<!-- eye -->
<svg style="left:830px;top:331px" width="11" height="8"><path d="M0.500 4C3 0 8 0 10.500 4C8 8 3 8 0.500 4Z" fill="#d8d8d8"/><circle cx="5.500" cy="3.800" r="2" fill="#333"/><circle cx="5" cy="3.200" r=".7" fill="#eee"/></svg>
<!-- layer lock -->
<svg style="left:967px;top:329px" width="9" height="12"><path d="M2.500 5.500V3.500A2 2 0 0 1 6.500 3.500V5.500" stroke="#e4e4e4" stroke-width="1.200" fill="none"/><rect x="1" y="5.500" width="7" height="5.500" fill="none" stroke="#e4e4e4" stroke-width="1.200"/><rect x="4" y="7.500" width="1" height="2" fill="#e4e4e4"/></svg>
<!-- layers bottom icons -->
<svg style="left:850px;top:521px" width="12" height="7"><rect x=".6" y="1" width="6" height="4.500" rx="2.200" fill="none" stroke="#888" stroke-width="1.100"/><rect x="5" y="1" width="6" height="4.500" rx="2.200" fill="none" stroke="#888" stroke-width="1.100"/></svg>
<div class="t" style="left:871px;top:518px;font-family:'Liberation Serif',serif;font-style:italic;font-size:11px;color:#8a8a8a">fx</div>
<svg style="left:891px;top:520px" width="10" height="9"><rect x=".5" y=".5" width="9" height="8" fill="#d8d8d8" stroke="#e8e8e8"/><circle cx="5" cy="4.500" r="2.300" fill="#444"/></svg>
<svg style="left:910px;top:519px" width="13" height="10"><circle cx="5" cy="5" r="4" fill="#555" stroke="#ddd" stroke-width="1.100"/><path d="M5 1A4 4 0 0 1 5 9Z" fill="#ddd" transform="rotate(45 5 5)"/><path d="M10 8H13L11.500 10Z" fill="#ddd"/></svg>
<svg style="left:929px;top:519px" width="11" height="10"><path d="M0.500 1.500H4L5 3H10.500V9.500H0.500Z" fill="#d0d0d0"/></svg>
<svg style="left:949px;top:519px" width="11" height="11"><path d="M1 1H10V10H4L1 7Z" fill="#d8d8d8"/><path d="M1 7H4V10Z" fill="#888"/></svg>
<svg style="left:969px;top:519px" width="9" height="11"><path d="M0.500 2H8.500M3 2V0.800H6V2M1.500 3.500H7.500V10.500H1.500Z" stroke="#777" stroke-width="1" fill="none"/><path d="M3.500 5V9M5.500 5V9" stroke="#777" stroke-width=".8"/></svg>
<!-- ICONS -->
<div class="a" id="taskbar"></div>
<div class="a" id="tbband"></div>
<div class="a" style="left:0;top:533px;width:1000px;height:1px;background:linear-gradient(90deg,#7a6a66,#9a8a84 50%,#a8988f)"></div>
<div class="a" style="left:12px;top:535px;width:16px;height:8px;border-radius:8px 8px 0 0;background:#b8c4d4"></div>
<div class="a" style="left:54px;top:536px;width:5px;height:2px;background:#a8a050"></div>
<div class="a" style="left:64px;top:536px;width:5px;height:2px;background:#8494a4"></div>
<div class="a" style="left:88px;top:533px;width:42px;height:6px;background:#9c8e88;border:1px solid #c4b8b2;border-radius:2px 2px 0 0"></div>
<div class="a" style="left:133px;top:533px;width:43px;height:6px;background:#9c908a;border:1px solid #c4b8b2;border-radius:2px 2px 0 0"></div>
<div class="a" style="left:178px;top:533px;width:43px;height:6px;background:#c8ccd4;border:1px solid #e4e4e8;border-radius:2px 2px 0 0"></div>
<div class="a" style="left:990px;top:533px;width:10px;height:5px;background:#8a7a78;border-left:1px solid #b0a4a0"></div>
</body>
</html>
